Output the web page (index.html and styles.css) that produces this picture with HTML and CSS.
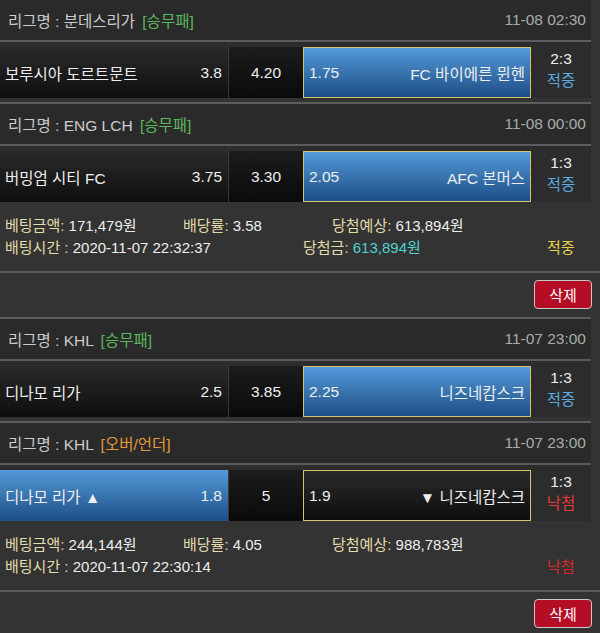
FILE: index.html
```html
<!DOCTYPE html>
<html lang="ko">

<head>
    <meta charset="UTF-8">
    <meta name="viewport" content="width=device-width, initial-scale=1.0">
    <title>베팅내역</title>
    <link rel="stylesheet" href="styles.css">
</head>

<body>
    <div class="bet">
        <div class="game">
            <div class="game-head">
                <span class="league">리그명 : 분데스리가 <em class="type win">[승무패]</em></span>
                <span class="time">11-08 02:30</span>
            </div>
            <div class="game-row">
                <div class="pick home"><span>보루시아 도르트문트</span><span>3.8</span></div>
                <div class="pick draw">4.20</div>
                <div class="pick away selected"><span>1.75</span><span>FC 바이에른 뮌헨</span></div>
                <div class="score"><span>2:3</span><span class="hit">적중</span></div>
            </div>
        </div>
        <div class="game">
            <div class="game-head">
                <span class="league">리그명 : ENG LCH <em class="type win">[승무패]</em></span>
                <span class="time">11-08 00:00</span>
            </div>
            <div class="game-row">
                <div class="pick home"><span>버밍엄 시티 FC</span><span>3.75</span></div>
                <div class="pick draw">3.30</div>
                <div class="pick away selected"><span>2.05</span><span>AFC 본머스</span></div>
                <div class="score"><span>1:3</span><span class="hit">적중</span></div>
            </div>
        </div>
        <div class="bet-info">
            <div class="info-line">
                <span class="c1"><label>베팅금액:</label> 171,479원</span>
                <span class="c2"><label>배당률:</label> 3.58</span>
                <span><label>당첨예상:</label> 613,894원</span>
            </div>
            <div class="info-line">
                <span class="c3"><label>배팅시간 :</label> 2020-11-07 22:32:37</span>
                <span class="c4"><label>당첨금:</label> <span class="won">613,894원</span></span>
                <span class="result win">적중</span>
            </div>
        </div>
        <div class="bet-actions"><button type="button" class="btn-del">삭제</button></div>
    </div>

    <div class="bet">
        <div class="game">
            <div class="game-head">
                <span class="league">리그명 : KHL <em class="type win">[승무패]</em></span>
                <span class="time">11-07 23:00</span>
            </div>
            <div class="game-row">
                <div class="pick home"><span>디나모 리가</span><span>2.5</span></div>
                <div class="pick draw">3.85</div>
                <div class="pick away selected"><span>2.25</span><span>니즈네캄스크</span></div>
                <div class="score"><span>1:3</span><span class="hit">적중</span></div>
            </div>
        </div>
        <div class="game">
            <div class="game-head">
                <span class="league">리그명 : KHL <em class="type ou">[오버/언더]</em></span>
                <span class="time">11-07 23:00</span>
            </div>
            <div class="game-row">
                <div class="pick home selected"><span>디나모 리가 ▲</span><span>1.8</span></div>
                <div class="pick draw">5</div>
                <div class="pick away"><span>1.9</span><span>▼ 니즈네캄스크</span></div>
                <div class="score"><span>1:3</span><span class="miss">낙첨</span></div>
            </div>
        </div>
        <div class="bet-info">
            <div class="info-line">
                <span class="c1"><label>베팅금액:</label> 244,144원</span>
                <span class="c2"><label>배당률:</label> 4.05</span>
                <span><label>당첨예상:</label> 988,783원</span>
            </div>
            <div class="info-line">
                <span class="c3"><label>배팅시간 :</label> 2020-11-07 22:30:14</span>
                <span class="c4"></span>
                <span class="result lose">낙첨</span>
            </div>
        </div>
        <div class="bet-actions"><button type="button" class="btn-del">삭제</button></div>
    </div>
</body>

</html>
```

FILE: styles.css
```css
body {
    margin: 0;
    background-color: #333;
    font-family: "Liberation Sans", "Noto Sans CJK KR", sans-serif;
    color: #eee;
}

.game {
    margin-right: 9px;
    border-top: 2px solid #5c5c5c;
    background: #2c2c2c;
}

.game + .game {
    margin-top: 4px;
}

.bet:first-child .game:first-child {
    border-top: none;
}

.game-head {
    display: flex;
    justify-content: space-between;
    align-items: center;
    height: 40px;
    padding: 0 5px 0 8px;
    background: #2a2a2a;
    border-bottom: 2px solid #5c5c5c;
    font-size: 15.5px;
    color: #ccc;
}

.time {
    color: #aaa;
}

.type {
    font-style: normal;
    margin-left: 3px;
}

.type.win {
    color: #5cb85c;
}

.type.ou {
    color: #e39a38;
}

.game-row {
    display: flex;
    height: 56px;
}

.pick {
    display: flex;
    justify-content: space-between;
    align-items: center;
    box-sizing: border-box;
    height: 51px;
    margin-top: 5px;
    font-size: 15.5px;
    color: #eee;
    background: linear-gradient(#2a2a2a, #0e0e0e);
}

.home {
    width: 229px;
    padding: 0 6px 0 5px;
    border-right: 1px solid #3a3a3a;
}

.draw {
    width: 74px;
    justify-content: center;
    background: linear-gradient(#1c1c1c, #0a0a0a);
}

.away {
    width: 228px;
    padding: 0 5px 0 5px;
    border: 1px solid #d9c26a;
}

.pick.selected {
    background: linear-gradient(#5399d9, #1e4f86);
}

.score {
    flex: 1;
    display: flex;
    flex-direction: column;
    align-items: center;
    justify-content: center;
    font-size: 15.5px;
    line-height: 22px;
    color: #eee;
}

.hit {
    color: #5aa9e0;
}

.miss {
    color: #e03a3a;
}

.bet-info {
    padding: 13px 0 12px 5px;
    border-bottom: 2px solid #5c5c5c;
    font-size: 15px;
    line-height: 22px;
    color: #eee;
}

.info-line {
    display: flex;
}

.info-line label {
    color: #e3dcaa;
}

.c1 {
    width: 178px;
}

.c2 {
    width: 149px;
}

.c3 {
    width: 298px;
}

.c4 {
    width: 244px;
}

.won {
    color: #4fd0d0;
}

.result.win {
    color: #e6d54a;
}

.result.lose {
    color: #d8262a;
}

.bet-actions {
    display: flex;
    justify-content: flex-end;
    padding: 7px 8px 8px;
}

.btn-del {
    width: 58px;
    height: 29px;
    padding: 0;
    background: #b50d26;
    border: 1px solid #c9c9c9;
    border-radius: 4px;
    color: #fff;
    font-family: inherit;
    font-size: 15px;
}
```
